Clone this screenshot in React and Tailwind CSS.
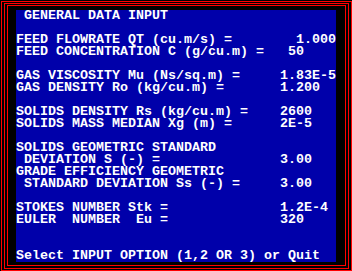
import React from "react";

const rows = [
  " GENERAL DATA INPUT",
  "",
  "FEED FLOWRATE QT (cu.m/s) =        1.000",
  "FEED CONCENTRATION C (g/cu.m) =   50",
  "",
  "GAS VISCOSITY Mu (Ns/sq.m) =     1.83E-5",
  "GAS DENSITY Ro (kg/cu.m) =       1.200",
  "",
  "SOLIDS DENSITY Rs (kg/cu.m) =    2600",
  "SOLIDS MASS MEDIAN Xg (m) =      2E-5",
  "",
  "SOLIDS GEOMETRIC STANDARD",
  " DEVIATION S (-) =               3.00",
  "GRADE EFFICIENCY GEOMETRIC",
  " STANDARD DEVIATION Ss (-) =     3.00",
  "",
  "STOKES NUMBER Stk =              1.2E-4",
  "EULER  NUMBER  Eu =              320",
  "",
  "",
  "Select INPUT OPTION (1,2 OR 3) or Quit",
];

export default function App() {
  return (
    <div className="w-[352px] h-[271px] bg-black pt-[1px] pl-[1px] flex">
      <div className="flex-1 flex border border-[#ff0000] pt-[1px] pl-[2px] pr-[2px] pb-[1px]">
        <div className="flex-1 flex border border-[#ff0000] pt-[1px] pl-[2px] pr-[2px] pb-[2px]">
          <div className="flex-1 flex border border-[#ff0000] pt-[4px] pl-[8px] pr-[9px] pb-[3px]">
            <div
              className="w-[320px] h-[252px] bg-[#0000aa] text-white font-bold text-[13.333px]"
              style={{ fontFamily: '"Liberation Mono", "DejaVu Sans Mono", monospace' }}
            >
              {rows.map((r, i) => (
                <div key={i} className="h-[12px] leading-[12px] whitespace-pre">
                  {r}
                </div>
              ))}
            </div>
          </div>
        </div>
      </div>
    </div>
  );
}
